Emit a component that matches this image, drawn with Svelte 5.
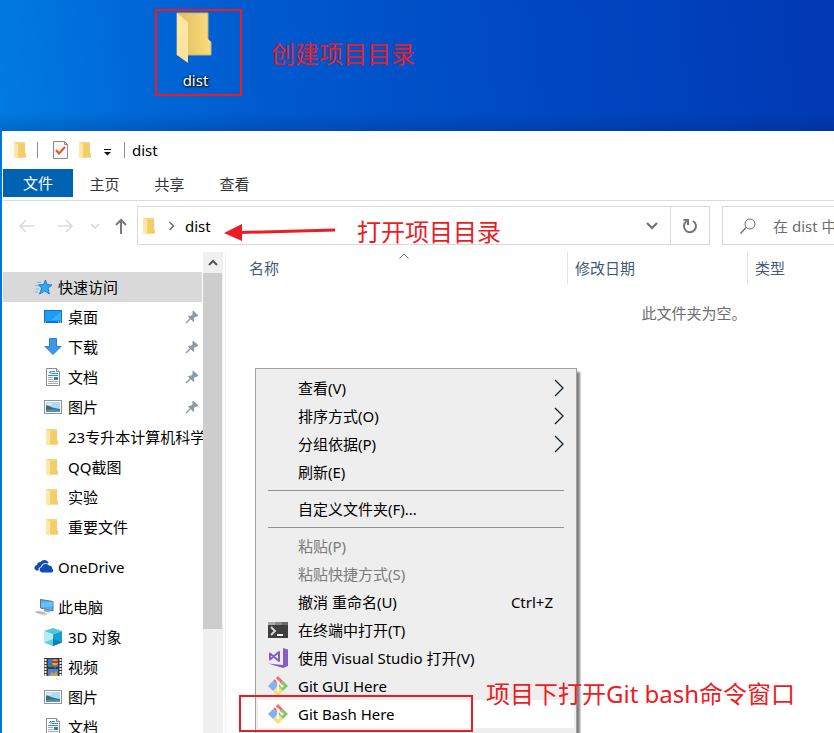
<script>
  const pinned = [
    { icon: 'desktop', label: '桌面', pin: true },
    { icon: 'download', label: '下载', pin: true },
    { icon: 'doc', label: '文档', pin: true },
    { icon: 'picture', label: '图片', pin: true },
    { icon: 'folder', label: '23专升本计算机科学' },
    { icon: 'folder', label: 'QQ截图' },
    { icon: 'folder', label: '实验' },
    { icon: 'folder', label: '重要文件' }
  ];
  const computer = [
    { icon: 'cube', label: '3D 对象' },
    { icon: 'video', label: '视频' },
    { icon: 'picture', label: '图片' },
    { icon: 'doc', label: '文档' }
  ];
  const menu = [
    [
      { label: '查看(V)', sub: true },
      { label: '排序方式(O)', sub: true },
      { label: '分组依据(P)', sub: true },
      { label: '刷新(E)' }
    ],
    [{ label: '自定义文件夹(F)...' }],
    [
      { label: '粘贴(P)', off: true },
      { label: '粘贴快捷方式(S)', off: true },
      { label: '撤消 重命名(U)', key: 'Ctrl+Z' },
      { label: '在终端中打开(T)', icon: 'terminal' },
      { label: '使用 Visual Studio 打开(V)', icon: 'vs' },
      { label: 'Git GUI Here', icon: 'git' },
      { label: 'Git Bash Here', icon: 'git', active: true }
    ]
  ];
</script>

{#snippet icon(name)}
  {#if name === 'folder'}
    <svg width="20" height="20" viewBox="0 0 20 20" aria-hidden="true">
      <path d="M3 2h11v11.500l1 1v3H3z" fill="#f7d57c" />
      <path d="M8 4h6v9l1 1.500v3H7z" fill="#f3cd6c" />
      <path d="M3 2l4 2.500v14.500l-4-2z" fill="#ffe8a3" />
    </svg>
  {:else if name === 'star'}
    <svg width="20" height="20" viewBox="0 0 20 20" aria-hidden="true">
      <path d="M11.500 3l1.500 4.500 5 .5-4 3 1.300 6-4.500-3-5.300 3 2.200-6-3.200-3 5-.5z" fill="#35a8f3" stroke="#1583cf" stroke-width="1" />
      <path d="M3 5.500h4M1 8.500h3M2 12h3M1 15h3" stroke="#6abcf3" />
    </svg>
  {:else if name === 'desktop'}
    <svg width="20" height="20" viewBox="0 0 20 20" aria-hidden="true">
      <rect x="1.500" y="3.500" width="17" height="12" fill="#1b9df8" stroke="#0b76c9" />
      <path d="M8 13L18 5v8z" fill="#3bb0ff" />
      <path d="M2 15h16" stroke="#0a62a8" />
      <path d="M2 15h1M15 15h1M17 15h1" stroke="#fff" />
    </svg>
  {:else if name === 'download'}
    <svg width="20" height="20" viewBox="0 0 20 20" aria-hidden="true">
      <path d="M6.500 1.500h7v8h4.500l-8 8-8-8h4.500z" fill="#3f97e6" stroke="#2a7fd0" />
    </svg>
  {:else if name === 'doc'}
    <svg width="20" height="20" viewBox="0 0 20 20" aria-hidden="true">
      <path d="M3.500 1.500h10l3 3v14h-13z" fill="#fff" stroke="#8c8c8c" />
      <path d="M13.500 1.500v3h3" fill="#e8e8e8" stroke="#8c8c8c" />
      <path d="M6 6l2-2v3M9 4.500h3M9 6.500h6M5 8.500h10" fill="none" stroke="#2492dc" />
      <path d="M5 10.500h5M5 12.500h5M5 14.500h10M5 16.500h10" stroke="#a3aab0" />
      <rect x="11" y="10" width="4" height="3" fill="#2b7db8" />
    </svg>
  {:else if name === 'picture'}
    <svg width="20" height="20" viewBox="0 0 20 20" aria-hidden="true">
      <rect x="1.500" y="3.500" width="17" height="13" fill="#fff" stroke="#8f959a" />
      <rect x="3" y="5" width="14" height="10" fill="#b4d8f4" />
      <path d="M3 8.500c4 0 5 2.500 14 3.500v3H3z" fill="#3e6d63" />
      <path d="M3 13q7-1.500 14 0v2H3z" fill="#4f8fc4" />
      <path d="M4 7h5" stroke="#fff" />
    </svg>
  {:else if name === 'cloud'}
    <svg width="20" height="20" viewBox="0 0 20 20" aria-hidden="true">
      <path d="M2 13.500a3 3 0 0 1 1-5.600 3 3 0 0 1 3.600-2.800 4.500 4.500 0 0 1 8.100 1l-1.200.4a4.700 4.700 0 0 0-6.500 3.300A3.600 3.600 0 0 0 4.500 13.500z" fill="#0d4fb4" />
      <path d="M8 15.500a2.800 2.800 0 0 1-.2-5.500 3.900 3.900 0 0 1 7-1.500 3 3 0 0 1 3.400 3 2.200 2.200 0 0 1-.7 4z" fill="#0d4fb4" />
    </svg>
  {:else if name === 'pc'}
    <svg width="20" height="20" viewBox="0 0 20 20" aria-hidden="true">
      <path d="M6.500 2.500l12.500 2v9.500l-12.500-3z" fill="#4eb4f7" stroke="#587486" />
      <path d="M7 6l12-1.500V9L7 10.500z" fill="#7fcbfb" opacity=".5" />
      <path d="M10 12v2.500l6 1v-2z" fill="#9aa3aa" />
      <path d="M0 15l5-1.500 10 3-4 2.500z" fill="#d5dade" />
      <path d="M2 15l7 2M4 14.500l7 2" stroke="#aab2b8" />
    </svg>
  {:else if name === 'cube'}
    <svg width="20" height="20" viewBox="0 0 20 20" aria-hidden="true">
      <path d="M1 4l9-3 9 3-9 3.500z" fill="#4cc7dc" />
      <path d="M1 4l9 3.500V19l-9-3.500z" fill="#b6edf2" />
      <path d="M19 4l-9 3.500V19l9-3.500z" fill="#14a0cc" />
      <path d="M1 15.500l9-3.500v7z" fill="#5ecfdd" />
      <path d="M19 15.500L10 12v7z" fill="#087fae" />
    </svg>
  {:else if name === 'video'}
    <svg width="20" height="20" viewBox="0 0 20 20" aria-hidden="true">
      <rect x="1" y="1" width="18" height="18" fill="#3a3a3a" />
      <path d="M2.500 2v17M17.500 2v17" stroke="#f2f2f2" stroke-width="2" stroke-dasharray="2 1" />
      <rect x="5" y="2" width="10" height="8" fill="#3b6fd0" />
      <rect x="5" y="12" width="10" height="7" fill="#4b82dd" />
      <circle cx="12" cy="5.500" r="3" fill="#e8a72c" />
      <path d="M9 5h6" stroke="#c9302c" stroke-width="2" />
      <path d="M5 9l3-3 3 4z" fill="#3a8b4a" />
      <path d="M11 10h2l-1 2z" fill="#e33" />
      <path d="M6 19l3-4 2 2 2-3 2 5z" fill="#d9a13a" />
    </svg>
  {:else if name === 'terminal'}
    <svg width="20" height="20" viewBox="0 0 20 20" aria-hidden="true">
      <rect x="0" y="2" width="20" height="16" fill="#3e3e3e" />
      <path d="M0 3.500h7" stroke="#a9a9a9" stroke-width="3" />
      <path d="M7 3.500h7" stroke="#8a8a8a" stroke-width="3" />
      <path d="M14 3.500h6" stroke="#6a6a6a" stroke-width="3" />
      <path d="M3 7l4 4-4 4" fill="none" stroke="#d6d6d6" stroke-width="2" />
      <path d="M9 15h6" stroke="#fff" stroke-width="2" />
    </svg>
  {:else if name === 'vs'}
    <svg width="20" height="20" viewBox="0 0 20 20" aria-hidden="true">
      <path d="M15 0l5 1.500v16.500l-5 2z" fill="#865fc5" />
      <path d="M0 15.500l15 1.500v3z" fill="#865fc5" />
      <path d="M2 5.500v6l9-7.500v9z" fill="none" stroke="#865fc5" stroke-width="2" stroke-linejoin="round" />
    </svg>
  {:else if name === 'git'}
    <svg width="20" height="20" viewBox="0 0 20 20" aria-hidden="true">
      <path d="M10 0l5 5-5 5-5-5z" fill="#f07070" />
      <path d="M5 5l5 5-5 5-5-5z" fill="#7cb2f8" />
      <path d="M15 5l5 5-5 5-5-5z" fill="#80c95c" />
      <path d="M10 10l5 5-5 5-5-5z" fill="#fbdc72" />
      <path d="M7 2.500l3 3v9M10 6l4 4" fill="none" stroke="#fff" stroke-width="1.500" />
      <circle cx="10" cy="6" r="1.500" fill="#fff" />
      <circle cx="14" cy="10" r="1.500" fill="#fff" />
      <circle cx="10" cy="14" r="1.500" fill="#fff" />
    </svg>
  {/if}
{/snippet}

{#snippet row(item)}
  <li>
    <a class="item child" href="#open">
      {@render icon(item.icon)}
      <span class="name">{item.label}</span>
      {#if item.pin}
        <svg class="pin" width="14" height="14" viewBox="0 0 14 14" aria-hidden="true">
          <path d="M8 1l5 4.500-1.500.8L10 6.500 8.500 8l.2 3.500L3.500 6.500 6.500 6 8 4.300z" fill="#8d99a3" stroke="#8d99a3" />
          <path d="M6 8l-5 5" stroke="#8d99a3" stroke-width="1.500" />
        </svg>
      {/if}
    </a>
  </li>
{/snippet}

<div class="desktop">
  <div class="wallpaper">
    <button class="shortcut">
      <svg width="36" height="52" viewBox="0 0 36 52" aria-hidden="true">
        <defs>
          <linearGradient id="back" x1="0" x2="1"><stop offset="0" stop-color="#e0bd5d" /><stop offset="1" stop-color="#fbdc7d" /></linearGradient>
          <linearGradient id="flap" x1="0" x2="0" y1="0" y2="1"><stop offset="0" stop-color="#ffe9a8" /><stop offset="1" stop-color="#fbe19a" /></linearGradient>
        </defs>
        <path d="M1 1h31v26l3 3v13H1z" fill="url(#back)" stroke="#b7b58a" stroke-width="1" />
        <path d="M1 1l11 9v41L1 43z" fill="url(#flap)" />
      </svg>
      <span>dist</span>
    </button>
    <p class="note">创建项目目录</p>
  </div>

  <div class="window">
    <header class="title">
      {@render icon('folder')}
      <i class="bar"></i>
      <button class="check" aria-label="属性">
        <svg width="16" height="20" viewBox="0 0 16 20" aria-hidden="true">
          <path d="M.5 1.500h11l3 3v14H.5z" fill="#f7f8fa" stroke="#8a8a8a" />
          <path d="M11.500 1.500v3h3" fill="none" stroke="#8a8a8a" />
          <path d="M3 10l3 3.500L12 7" fill="none" stroke="#e8561c" stroke-width="2" />
        </svg>
      </button>
      <button class="new" aria-label="新建文件夹">{@render icon('folder')}</button>
      <button class="drop" aria-label="自定义快速访问工具栏">
        <svg width="8" height="8" viewBox="0 0 8 8" aria-hidden="true"><path d="M0 1.500h7" stroke="#111" /><path d="M0 4h7L3.500 7.500z" fill="#111" /></svg>
      </button>
      <i class="bar"></i>
      <span>dist</span>
    </header>

    <div class="tabs">
      <button class="file">文件</button>
      <button>主页</button>
      <button>共享</button>
      <button>查看</button>
    </div>

    <div class="nav">
      <div class="arrows">
        <button aria-label="后退"><svg width="16" height="16" viewBox="0 0 16 16"><path d="M15.500 8H1M7 2L1 8l6 6" fill="none" stroke="#dadada" stroke-width="1.500" /></svg></button>
        <button class="fwd" aria-label="前进"><svg width="16" height="16" viewBox="0 0 16 16"><path d="M.5 8H15M9 2l6 6-6 6" fill="none" stroke="#dadada" stroke-width="1.500" /></svg></button>
        <button class="recent" aria-label="最近浏览的位置"><svg width="10" height="8" viewBox="0 0 10 8"><path d="M1 2l4 4 4-4" fill="none" stroke="#d5d5d5" stroke-width="1.500" /></svg></button>
        <button class="up" aria-label="上移"><svg width="14" height="18" viewBox="0 0 14 18"><path d="M7 17V3M2 8l5-5 5 5" fill="none" stroke="#7a7a7a" stroke-width="2" /></svg></button>
      </div>
      <div class="address">
        {@render icon('folder')}
        <svg class="crumb" width="8" height="10" viewBox="0 0 8 10" aria-hidden="true"><path d="M1.500 1l4 4-4 4" fill="none" stroke="#6b6b6b" stroke-width="1.500" /></svg>
        <button class="path">dist</button>
        <button class="history" aria-label="以前的位置"><svg width="12" height="8" viewBox="0 0 12 8"><path d="M1 1l5 5 5-5" fill="none" stroke="#707070" stroke-width="2" /></svg></button>
        <button class="refresh" aria-label="刷新"><svg width="16" height="16" viewBox="0 0 16 16"><path d="M11 3A6 6 0 1 1 4.500 3.300" fill="none" stroke="#757575" stroke-width="2" /><path d="M1.500 2H6v5" fill="none" stroke="#757575" stroke-width="2" /></svg></button>
      </div>
      <label class="search">
        <svg width="16" height="16" viewBox="0 0 16 16" aria-hidden="true"><circle cx="10" cy="6" r="5" fill="none" stroke="#707070" /><path d="M6 9.500L.5 15.500" stroke="#707070" stroke-width="1.500" /></svg>
        <input type="text" placeholder="在 dist 中" aria-label="搜索" />
      </label>
    </div>

    <div class="body">
      <nav class="tree">
        <a class="item top selected" href="#quick">{@render icon('star')}<span class="name">快速访问</span></a>
        <ul>{#each pinned as item}{@render row(item)}{/each}</ul>
        <a class="item top drive" href="#onedrive">{@render icon('cloud')}<span class="name">OneDrive</span></a>
        <a class="item top" href="#pc">{@render icon('pc')}<span class="name">此电脑</span></a>
        <ul>{#each computer as item}{@render row(item)}{/each}</ul>
      </nav>
      <div class="scroll">
        <div class="cap"><svg width="10" height="8" viewBox="0 0 10 8" aria-hidden="true"><path d="M1 6l4-4 4 4" fill="none" stroke="#555" stroke-width="2" /></svg></div>
        <div class="thumb"></div>
      </div>

      <main class="view">
        <div class="list">
          <div class="columns">
            <button class="c-name">名称
              <svg class="sort" width="10" height="6" viewBox="0 0 10 6" aria-hidden="true"><path d="M.5 5.500L5 1l4.500 4.500" fill="none" stroke="#666" /></svg>
            </button>
            <button class="c-date">修改日期</button>
            <button class="c-type">类型</button>
          </div>
          <p class="empty">此文件夹为空。</p>
        </div>

        <div class="menu" role="menu">
          {#each menu as group, i}
            {#if i > 0}<hr />{/if}
            {#each group as entry}
              <button role="menuitem" class:active={entry.active} class:off={entry.off}>
                <span class="slot">{#if entry.icon}{@render icon(entry.icon)}{/if}</span>
                <span class="label">{entry.label}</span>
                {#if entry.key}<span class="key">{entry.key}</span>{/if}
                {#if entry.sub}
                  <svg width="10" height="18" viewBox="0 0 10 18" aria-hidden="true"><path d="M1 1l8 8-8 8" fill="none" stroke="#123" stroke-width="1.300" /></svg>
                {/if}
              </button>
            {/each}
          {/each}
        </div>
        <div class="frame"></div>
        <p class="note bash">项目下打开Git bash命令窗口</p>
      </main>
    </div>

    <div class="pointer">
      <svg width="114" height="20" viewBox="0 0 114 20" aria-hidden="true">
        <path d="M1 11L19 2v17z" fill="#ec1c24" /><path d="M17 10.500L112 8" stroke="#ec1c24" stroke-width="3" />
      </svg>
      <p class="note">打开项目目录</p>
    </div>
  </div>
</div>

<style>
  :global(body) { margin: 0; }
  .desktop, .desktop * { box-sizing: border-box; }
  .desktop {
    display: flex;
    flex-direction: column;
    height: 100vh;
    overflow: hidden;
    background: #0078d7;
    color: #000;
    font: 15px/20px "Noto Sans", "Noto Sans CJK SC", sans-serif;
  }
  button {
    padding: 0;
    border: 0;
    background: none;
    color: inherit;
    font: inherit;
    text-align: left;
    white-space: nowrap;
  }
  svg { display: block; flex: none; }
  p, ul { margin: 0; padding: 0; list-style: none; }
  a { color: inherit; text-decoration: none; }
  .note { color: #ec1c24; font-size: 24px; line-height: 32px; white-space: nowrap; }

  .wallpaper {
    flex: none;
    display: flex;
    align-items: flex-start;
    gap: 29px;
    height: 131px;
    padding: 9px 0 0 155px;
    background:
      linear-gradient(to bottom, transparent 112px, rgba(0, 30, 90, .2)),
      linear-gradient(84deg, #007ce2, #006ad8 15%, #005ace 32%, #004dc5 55%, #0041bc 80%, #0238b3);
  }
  .wallpaper .note { padding-top: 29px; }
  .shortcut {
    display: flex;
    flex-direction: column;
    align-items: center;
    width: 87px;
    height: 87px;
    padding: 1px 10px 0 0;
    border: 2px solid #ec1c24;
    color: #fff;
    text-shadow: 1px 1px 2px #000, 0 0 3px #000;
  }
  .shortcut span { padding: 6px 0 0 4px; }

  .window {
    position: relative;
    flex: 1;
    min-height: 0;
    display: flex;
    flex-direction: column;
    margin-left: 2px;
    padding-left: 1px;
    background: #fff;
  }
  .title { display: flex; align-items: center; flex: none; height: 38px; padding-left: 8px; }
  .bar { width: 1px; height: 16px; margin: 0 0 0 6px; background: #8f8f8f; }
  .check { margin-left: 15px; }
  .new { margin-left: 7px; }
  .drop { margin: 4px 6px 0 8px; }
  .title span { padding-left: 7px; }

  .tabs { display: flex; flex: none; height: 32px; padding-bottom: 2px; border-bottom: 1px solid #dadbdc; color: #333; }
  .tabs button { width: 65px; text-align: center; }
  .tabs .file { width: 70px; height: 28px; margin-right: -1px; background: #0063b1; color: #fff; }

  .nav { display: flex; flex: none; height: 51px; padding-top: 5px; overflow: hidden; }
  .arrows { display: flex; align-items: center; width: 134px; height: 39px; padding-left: 16px; }
  .fwd { margin-left: 22px; }
  .recent { margin-left: 17px; }
  .up { margin-left: 14px; }
  .address { display: flex; align-items: center; flex: 1; height: 39px; padding-left: 2px; border: 1px solid #d9d9d9; }
  .crumb { margin: 0 9px 0 8px; }
  .path { flex: 1; }
  .history { margin-right: 12px; }
  .refresh { display: flex; align-items: center; justify-content: center; width: 39px; height: 37px; border-left: 1px solid #d9d9d9; }
  .search { display: flex; align-items: center; flex: none; width: 112px; height: 39px; margin-left: 12px; padding-left: 17px; border: 1px solid #d9d9d9; border-right: 0; }
  .search input { flex: none; width: 80px; height: 30px; margin-left: 17px; padding: 0; border: 0; outline: 0; background: none; font: inherit; }
  .search input::placeholder { color: #6d6d6d; opacity: 1; }

  .body { display: flex; flex: 1; min-height: 0; }
  .tree { flex: none; width: 200px; padding-top: 20px; overflow: hidden; }
  .item { display: flex; align-items: center; height: 30px; margin-right: 1px; }
  .top { padding-left: 31px; }
  .child { padding-left: 40px; margin-right: 0; }
  .name { flex: 1; padding-left: 4px; white-space: nowrap; }
  .child .name { padding-left: 5px; }
  .pin { margin-right: 4px; }
  .selected { background: #d9d9d9; }
  .drive { margin-top: 10px; margin-bottom: 10px; }

  .scroll { display: flex; flex-direction: column; flex: none; width: 20px; background: #f0f0f0; }
  .cap { display: flex; align-items: center; justify-content: center; flex: none; height: 21px; }
  .thumb { height: 74%; margin-right: 1px; background: #cdcdcd; }

  .view { position: relative; flex: 1; min-width: 0; margin-left: 2px; border-left: 1px solid #f0f0f0; }
  .list { height: 100%; overflow: hidden; }
  .columns { display: flex; height: 32px; color: #44597a; }
  .columns button { flex: none; border-right: 1px solid #e5e5e5; padding-left: 7px; }
  .columns .c-name { position: relative; width: 342px; padding-left: 23px; }
  .sort { position: absolute; top: 1px; left: 173px; }
  .columns .c-date { width: 180px; }
  .columns .c-type { width: 180px; }
  .empty { width: 936px; padding-top: 19px; color: #6d6d6d; text-align: center; }

  .menu {
    position: absolute;
    top: 116px;
    left: 29px;
    width: 322px;
    padding: 5px 2px;
    border: 1px solid #a0a0a0;
    background: #eee;
    box-shadow: 3px 4px 2px rgba(0, 0, 0, .5);
  }
  .menu button { display: flex; align-items: center; width: 100%; height: 28px; padding: 0 10px; }
  .slot { width: 20px; margin-right: 10px; }
  .label { flex: 1; }
  .key { margin-right: 11px; }
  .menu .active { background: #fff; }
  .menu .off { color: #7b7b7b; }
  hr { height: 1px; margin: 4px 10px; border: 0; background: #919191; }

  .frame { position: absolute; top: 443px; left: 13px; width: 234px; height: 37px; border: 2px solid #ec1c24; }
  .bash { position: absolute; top: 426px; left: 260px; }
  .pointer { position: absolute; top: 85px; left: 221px; display: flex; align-items: flex-start; gap: 20px; }
  .pointer svg { margin-top: 6px; }
</style>
